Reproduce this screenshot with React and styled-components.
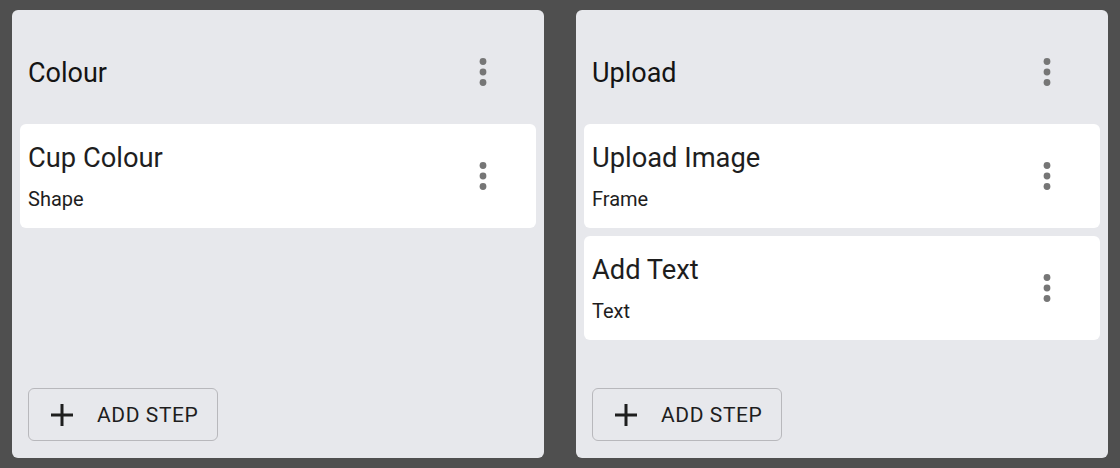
import React from "react";
import styled, { createGlobalStyle } from "styled-components";

const Global = createGlobalStyle`
  html, body { margin: 0; padding: 0; background: #4f4f4f; }
  body { font-family: Roboto, "Liberation Sans", Arial, sans-serif; color: rgba(0,0,0,0.87); }
  * { box-sizing: border-box; }
`;

const Board = styled.div`
  display: flex;
  gap: 32px;
  padding: 10px 12px;
  width: 1120px;
  height: 468px;
`;

const Column = styled.section`
  flex: 1;
  height: 448px;
  background: #e7e8ec;
  border-radius: 6px;
  padding: 8px;
  display: flex;
  flex-direction: column;
  gap: 8px;
`;

const ColumnHeader = styled.div`
  display: flex;
  align-items: center;
  justify-content: space-between;
  padding: 35px 0 23px 8px;
`;

const ColumnTitle = styled.h2`
  margin: 0;
  font-size: 27px;
  font-weight: 400;
  line-height: 40px;
  color: #141414;
`;

const Card = styled.div`
  background: #fff;
  border-radius: 6px;
  height: 104px;
  display: flex;
  align-items: center;
  justify-content: space-between;
  padding: 0 0 0 8px;
`;

const CardText = styled.div`
  display: flex;
  flex-direction: column;
  align-self: flex-start;
  padding-top: 15.4px;
`;

const CardTitle = styled.div`
  font-size: 27.3px;
  line-height: 38px;
  color: #1e1e1e;
`;

const CardSubtitle = styled.div`
  margin-top: 7.6px;
  font-size: 20px;
  line-height: 28px;
  color: #1e1e1e;
`;

const Kebab = styled.button`
  border: 0;
  background: transparent;
  padding: 0;
  width: 42px;
  height: 42px;
  margin-right: 32px;
  margin-top: ${(p) => p.$shift || 0}px;
  display: flex;
  align-items: center;
  justify-content: center;
  cursor: pointer;
`;

const Footer = styled.div`
  margin-top: auto;
  padding: 0 0 9px 8px;
`;

const AddButton = styled.button`
  display: flex;
  align-items: center;
  gap: 24px;
  width: 190px;
  height: 53px;
  padding: 0 0 0 22px;
  border: 1.5px solid #b8b8bc;
  border-radius: 6px;
  background: transparent;
  font-family: Roboto, "Liberation Sans", Arial, sans-serif;
  font-size: 21px;
  letter-spacing: 0.6px;
  font-weight: 400;
  color: #1e1e1e;
  cursor: pointer;
`;

const DotsIcon = () => (
  <svg width="10" height="30" viewBox="0 0 10 30">
    <circle cx="5" cy="4.5" r="3.4" fill="#767676" />
    <circle cx="5" cy="15" r="3.4" fill="#767676" />
    <circle cx="5" cy="25.5" r="3.4" fill="#767676" />
  </svg>
);

const PlusIcon = () => (
  <svg width="22" height="22" viewBox="0 0 22 22">
    <path d="M9.5 0h3v9.5H22v3h-9.5V22h-3v-9.5H0v-3h9.5z" fill="#1e1e1e" />
  </svg>
);

const columns = [
  { title: "Colour", steps: [{ title: "Cup Colour", sub: "Shape" }] },
  {
    title: "Upload",
    steps: [
      { title: "Upload Image", sub: "Frame" },
      { title: "Add Text", sub: "Text" },
    ],
  },
];

export default function App() {
  return (
    <>
      <Global />
      <Board>
        {columns.map((c) => (
          <Column key={c.title}>
            <ColumnHeader>
              <ColumnTitle>{c.title}</ColumnTitle>
              <Kebab $shift={-3} aria-label="more">
                <DotsIcon />
              </Kebab>
            </ColumnHeader>
            {c.steps.map((s) => (
              <Card key={s.title}>
                <CardText>
                  <CardTitle>{s.title}</CardTitle>
                  <CardSubtitle>{s.sub}</CardSubtitle>
                </CardText>
                <Kebab aria-label="more">
                  <DotsIcon />
                </Kebab>
              </Card>
            ))}
            <Footer>
              <AddButton>
                <PlusIcon />
                ADD STEP
              </AddButton>
            </Footer>
          </Column>
        ))}
      </Board>
    </>
  );
}
